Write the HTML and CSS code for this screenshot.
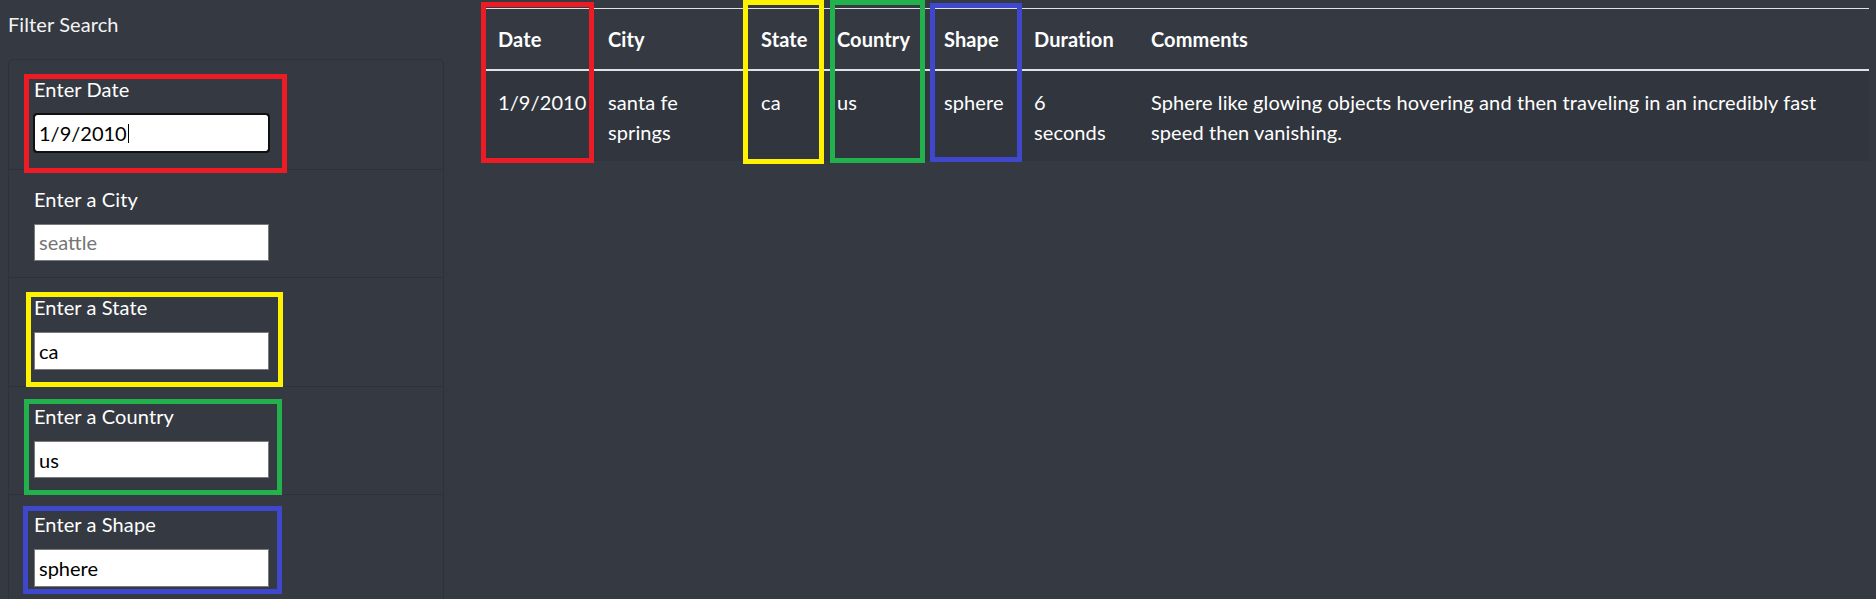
FILE: index.html
```html
<!DOCTYPE html>
<html lang="en">
<head>
<meta charset="utf-8">
<title>UFO Sightings - Filter Search</title>
<link rel="stylesheet" href="styles.css">
</head>
<body>
<div class="page">
  <aside class="sidebar">
    <h2 class="sidebar-title">Filter Search</h2>
    <ul class="filters">
      <li class="filter">
        <label class="filter-label" for="datetime">Enter Date</label>
        <div class="field">
          <input class="filter-input is-focused" id="datetime" type="text" value="1/9/2010">
          <span class="caret"></span>
        </div>
      </li>
      <li class="filter">
        <label class="filter-label" for="city">Enter a City</label>
        <div class="field"><input class="filter-input" id="city" type="text" placeholder="seattle"></div>
      </li>
      <li class="filter">
        <label class="filter-label" for="state">Enter a State</label>
        <div class="field"><input class="filter-input" id="state" type="text" value="ca"></div>
      </li>
      <li class="filter">
        <label class="filter-label" for="country">Enter a Country</label>
        <div class="field"><input class="filter-input" id="country" type="text" value="us"></div>
      </li>
      <li class="filter">
        <label class="filter-label" for="shape">Enter a Shape</label>
        <div class="field"><input class="filter-input" id="shape" type="text" value="sphere"></div>
      </li>
    </ul>
  </aside>

  <main class="results">
    <table class="ufo-table">
      <colgroup>
        <col class="c-date"><col class="c-city"><col class="c-state"><col class="c-country"><col class="c-shape"><col class="c-duration"><col class="c-comments">
      </colgroup>
      <thead>
        <tr>
          <th>Date</th><th>City</th><th>State</th><th>Country</th><th>Shape</th><th>Duration</th><th>Comments</th>
        </tr>
      </thead>
      <tbody>
        <tr>
          <td>1/9/2010</td>
          <td>santa fe springs</td>
          <td>ca</td>
          <td>us</td>
          <td>sphere</td>
          <td>6 seconds</td>
          <td>Sphere like glowing objects hovering and then traveling in an incredibly fast speed then vanishing.</td>
        </tr>
      </tbody>
    </table>
  </main>

  <div class="mark mark-red side-date"></div>
  <div class="mark mark-yellow side-state"></div>
  <div class="mark mark-green side-country"></div>
  <div class="mark mark-blue side-shape"></div>
  <div class="mark mark-red col-date"></div>
  <div class="mark mark-yellow col-state"></div>
  <div class="mark mark-green col-country"></div>
  <div class="mark mark-blue col-shape"></div>
</div>
</body>
</html>
```

FILE: styles.css
```css
* { box-sizing: border-box; }

html, body {
  margin: 0;
  padding: 0;
  background: #353a42;
}

body {
  font-family: Lato, "Noto Sans", sans-serif;
  font-size: 20px;
  line-height: 30px;
  letter-spacing: 0.1px;
  color: #fff;
  overflow: hidden;
}

.page {
  position: relative;
  display: flex;
  align-items: flex-start;
  padding: 0 7px 0 8px;
  min-height: 599px;
}

/* ---------- sidebar ---------- */
.sidebar {
  width: 436px;
  flex: 0 0 436px;
  padding-top: 9px;
}

.sidebar-title {
  margin: 0 0 20px;
  font-size: 20px;
  line-height: 30px;
  font-weight: 400;
  color: #f4f4f4;
}

.filters {
  list-style: none;
  margin: 0;
  padding: 0;
  border: 1px solid #2d3138;
  border-radius: 5px;
}

.filter {
  padding: 14px 25px 15px 25px;
  height: 108.6px;
}

.filter + .filter {
  border-top: 1px solid #2d3138;
}

.filter-label {
  display: block;
  margin-bottom: 10px;
  line-height: 30px;
  color: #fff;
}

.field {
  position: relative;
  width: 235px;
}

.filter-input {
  display: block;
  width: 235px;
  height: 37.6px;
  margin: 0;
  padding: 0 4px;
  border: 1px solid #7a7a7a;
  border-radius: 0;
  background: #fff;
  color: #000;
  font-family: inherit;
  font-size: 20px;
  letter-spacing: 0;
  outline: none;
}

.filter-input::placeholder {
  color: #757575;
}

.filter-input.is-focused {
  border-color: #101010;
  outline: 2px solid #101010;
  outline-offset: -1px;
  border-radius: 3px;
}

.caret {
  position: absolute;
  left: 94px;
  top: 10px;
  width: 1px;
  height: 19px;
  background: #000;
}

/* ---------- table ---------- */
.results {
  flex: 1 1 auto;
  margin-left: 39px;
  padding-top: 8px;
}

.ufo-table {
  width: 100%;
  table-layout: fixed;
  border-collapse: collapse;
  color: #fff;
}

.c-date { width: 110px; }
.c-city { width: 153px; }
.c-state { width: 76px; }
.c-country { width: 107px; }
.c-shape { width: 90px; }
.c-duration { width: 117px; }

.ufo-table th,
.ufo-table td {
  padding: 15px;
  text-align: left;
  line-height: 30px;
}

.ufo-table th {
  font-weight: 700;
  vertical-align: bottom;
  border-top: 1px solid #dee2e6;
  border-bottom: 2px solid #dee2e6;
  white-space: nowrap;
}

.ufo-table td {
  vertical-align: top;
  padding-top: 16px;
  padding-bottom: 14px;
  background: #31353d;
}

/* ---------- annotation marks ---------- */
.mark {
  position: absolute;
  border: 5px solid;
  pointer-events: none;
}

.mark-red { border-color: #ed1c24; }
.mark-yellow { border-color: #fff200; }
.mark-green { border-color: #22b14c; }
.mark-blue { border-color: #3f48cc; }

.side-date { left: 24px; top: 74px; width: 263px; height: 99px; }
.side-state { left: 26px; top: 292px; width: 257px; height: 95px; }
.side-country { left: 24px; top: 399px; width: 258px; height: 96px; }
.side-shape { left: 23px; top: 506px; width: 259px; height: 88px; }

.col-date { left: 481px; top: 2px; width: 113px; height: 161px; }
.col-state { left: 743px; top: 0; width: 81px; height: 164px; }
.col-country { left: 830px; top: 0; width: 95px; height: 163px; }
.col-shape { left: 930px; top: 3px; width: 92px; height: 159px; }
```
